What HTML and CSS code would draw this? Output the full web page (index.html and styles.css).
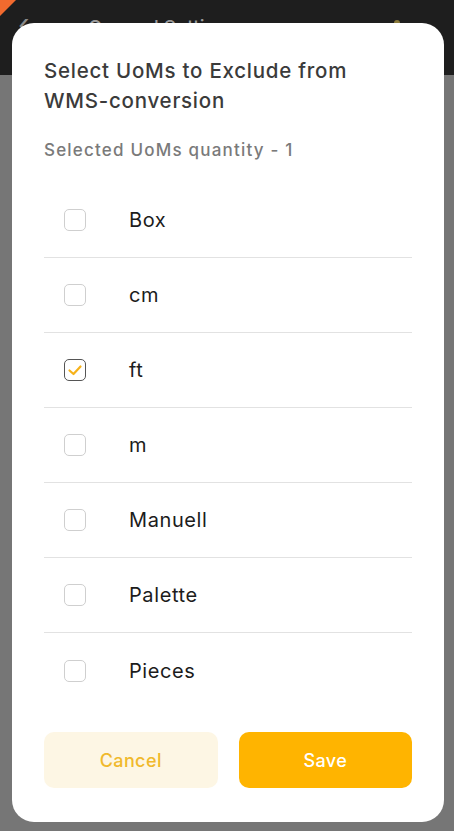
FILE: index.html
```html
<!DOCTYPE html>
<html>
<head>
<meta charset="utf-8">
<link rel="stylesheet" href="styles.css">
</head>
<body>
<div class="screen">
  <header class="appbar">
    <span class="corner"></span>
    <span class="back">&#8249;</span>
    <span class="apptitle">General Settings</span>
    <span class="dot"></span>
  </header>
  <div class="modal">
    <h1 class="title">Select UoMs to Exclude from WMS-conversion</h1>
    <p class="subtitle">Selected UoMs quantity - 1</p>
    <ul class="list">
      <li class="row"><span class="box"></span><span class="label">Box</span></li>
      <li class="row"><span class="box"></span><span class="label">cm</span></li>
      <li class="row"><span class="box checked"><svg viewBox="0 0 22 22" width="22" height="22"><path d="M5.5 11.5 L9.5 15 L16.5 7.5" fill="none" stroke="#f6b21a" stroke-width="2.2" stroke-linecap="round" stroke-linejoin="round"/></svg></span><span class="label">ft</span></li>
      <li class="row"><span class="box"></span><span class="label">m</span></li>
      <li class="row"><span class="box"></span><span class="label">Manuell</span></li>
      <li class="row"><span class="box"></span><span class="label">Palette</span></li>
      <li class="row last"><span class="box"></span><span class="label">Pieces</span></li>
    </ul>
    <div class="actions">
      <button class="btn cancel">Cancel</button>
      <button class="btn save">Save</button>
    </div>
  </div>
</div>
</body>
</html>
```
FILE: styles.css
```css
* { box-sizing: border-box; }
html, body { margin: 0; padding: 0; }
body {
  width: 454px;
  height: 831px;
  overflow: hidden;
  font-family: Inter, "Noto Sans", "Liberation Sans", sans-serif;
  background: #767676;
}
.screen {
  position: relative;
  width: 454px;
  height: 831px;
}
.appbar {
  position: relative;
  height: 75px;
  background: #1e1e1e;
  overflow: hidden;
}
.corner {
  position: absolute;
  left: 0;
  top: 0;
  width: 0;
  height: 0;
  border-top: 16px solid #f26a2e;
  border-right: 16px solid transparent;
}
.back {
  position: absolute;
  left: 18px;
  top: 9px;
  color: #8a8a8a;
  font-size: 30px;
  line-height: 30px;
}
.apptitle {
  position: absolute;
  left: 88px;
  top: 16px;
  color: #9a9a9a;
  font-size: 19px;
  font-weight: 500;
}
.dot {
  position: absolute;
  left: 394px;
  top: 20px;
  width: 6px;
  height: 6px;
  border-radius: 50%;
  background: #8a7a3a;
}
.modal {
  position: absolute;
  left: 12px;
  top: 23px;
  width: 432px;
  height: 799px;
  background: #fff;
  border-radius: 22px;
  padding: 33px 32px 34px 32px;
  display: flex;
  flex-direction: column;
}
.title {
  margin: 0;
  font-size: 20.5px;
  line-height: 30px;
  font-weight: 500;
  color: #3b3b3b;
  letter-spacing: 0.75px;
  padding-right: 20px;
}
.subtitle {
  margin: 24px 0 0 0;
  font-size: 17px;
  line-height: 20px;
  font-weight: 500;
  color: #7a7a7a;
  letter-spacing: 1.2px;
}
.list {
  list-style: none;
  margin: 23px 0 0 0;
  padding: 0;
}
.row {
  height: 75px;
  display: flex;
  align-items: center;
  border-bottom: 1.5px solid #e2e2e2;
  padding-left: 20px;
}
.row.last { border-bottom: none; }
.box {
  width: 22px;
  height: 22px;
  border: 1.5px solid #cfcfcf;
  border-radius: 5px;
  display: flex;
  align-items: center;
  justify-content: center;
  flex: none;
}
.box svg { display: block; margin: -1.5px; }
.box.checked { border: 1.5px solid #555; }
.label {
  margin-left: 43px;
  font-size: 20px;
  color: #1c1c1c;
  letter-spacing: 0.6px;
}
.actions {
  margin-top: auto;
  display: flex;
  gap: 21px;
}
.btn {
  flex: 1;
  height: 56px;
  border: none;
  border-radius: 10px;
  font-family: inherit;
  font-size: 18px;
  font-weight: 500;
  letter-spacing: 0.4px;
}
.cancel {
  background: #fdf6e4;
  color: #f0b92c;
}
.save {
  background: #ffb400;
  color: #fff;
}
```
